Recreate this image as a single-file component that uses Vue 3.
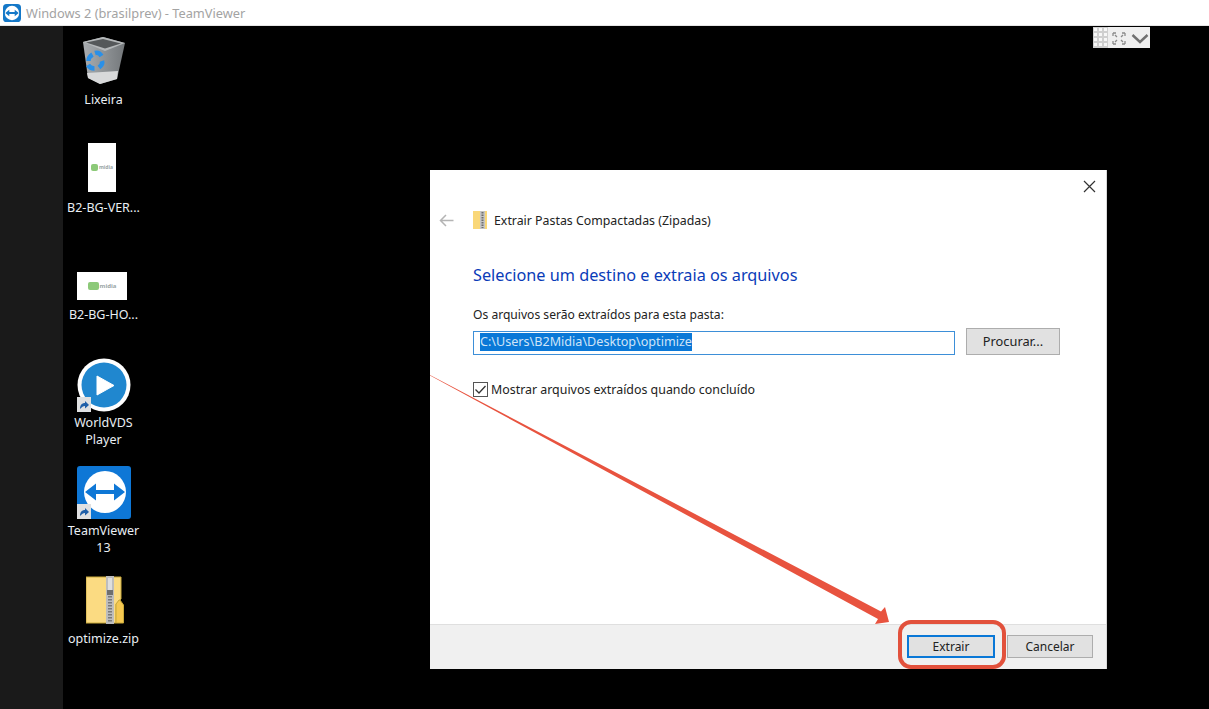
<script setup>
const icons = [
  { id: 'bin', label: ['Lixeira'], top: 91 },
  { id: 'v', label: ['B2-BG-VER...'], top: 199 },
  { id: 'h', label: ['B2-BG-HO...'], top: 306 },
  { id: 'w', label: ['WorldVDS', 'Player'], top: 414 },
  { id: 't', label: ['TeamViewer', '13'], top: 522 },
  { id: 'z', label: ['optimize.zip'], top: 630 }
]
</script>

<template>
  <div class="screen">
    <header class="titlebar">
      <svg class="tv" width="18" height="18" viewBox="0 0 20 20">
        <rect width="20" height="20" rx="4" fill="#1478c8" />
        <circle cx="10" cy="10" r="8" fill="#fff" />
        <path d="M2.500 10l4.500-3.600v2.400h6V6.400l4.500 3.600-4.500 3.600v-2.400H7v2.400z" fill="#1478c8" />
      </svg>
      <span>Windows 2 (brasilprev) - TeamViewer</span>
    </header>

    <main class="desk">
      <aside class="strip"></aside>

      <div class="tool">
        <svg width="57" height="21" viewBox="0 0 57 21">
          <rect width="57" height="21" fill="#efefef" />
          <rect width="15" height="21" fill="#cfcfcf" />
          <g fill="#f7f7f7">
            <rect x="1" y="1" width="3" height="3" /><rect x="6" y="1" width="3" height="3" /><rect x="11" y="1" width="3" height="3" />
            <rect x="1" y="6" width="3" height="3" /><rect x="6" y="6" width="3" height="3" /><rect x="11" y="6" width="3" height="3" />
            <rect x="1" y="11" width="3" height="3" /><rect x="6" y="11" width="3" height="3" /><rect x="11" y="11" width="3" height="3" />
            <rect x="1" y="16" width="3" height="3" /><rect x="6" y="16" width="3" height="3" /><rect x="11" y="16" width="3" height="3" />
          </g>
          <path d="M20 6h3M20 6v3M32 6h-3M32 6v3M20 17h3M20 17v-3M32 17h-3M32 17v-3M22 8l2 2M30 8l-2 2M22 15l2-2M30 15l-2-2" stroke="#8a8a8a" stroke-width="1.300" fill="none" />
          <path d="M39.500 8l7.500 7 7.500-7" stroke="#707070" stroke-width="2.400" fill="none" />
        </svg>
      </div>

      <div v-for="i in icons" :key="i.id" class="label" :style="{ top: i.top + 'px' }">
        <div v-for="l in i.label" :key="l">{{ l }}</div>
      </div>

      <svg class="bin" width="42" height="47" viewBox="0 0 42 47">
        <defs>
          <linearGradient id="binBody" x1="0" y1="0" x2="1" y2="0">
            <stop offset="0" stop-color="#a9adb0" />
            <stop offset="1" stop-color="#74787b" />
          </linearGradient>
        </defs>
        <path d="M0 5L20 0l22 6-8 36-17 5-12-6z" fill="url(#binBody)" />
        <path d="M0 5L20 0l22 6-20 8z" fill="#b5b8ba" />
        <path d="M3 5.500L20 2l18 4.500-16 5z" fill="#55585a" />
        <path d="M4 36l31-2-1 8-17 5-12-6z" fill="#d8d9da" />
        <g fill="none" stroke="#2a90e8" stroke-width="4.500">
          <path d="M5.500 24c0-3 1.500-5 4-6.500" />
          <path d="M12 16c3-1 5 .5 6.500 3" />
          <path d="M19 24c1 3-1 5-3 6.500" />
          <path d="M11.500 31.500c-3 0-5-1-6.500-3.500" />
        </g>
      </svg>

      <div class="doc v"><i></i><b>midia</b></div>
      <div class="doc h"><i></i><b>midia</b></div>

      <svg class="player" width="54" height="54" viewBox="0 0 54 54">
        <circle cx="27" cy="27" r="26.500" fill="#fff" />
        <circle cx="27" cy="27" r="22.500" fill="#2087cf" />
        <path d="M20 18l17 9.500L20 37z" fill="#fff" stroke="#fff" stroke-width="1" stroke-linejoin="round" />
        <rect x="0" y="39" width="14" height="15" fill="#dfe0e1" />
        <path d="M3 51c0-4 2-6 5-6v-2l4 4-4 3.500V48c-2 0-3 1-5 3z" fill="#1f5fa8" />
      </svg>

      <svg class="tvbig" width="54" height="53" viewBox="0 0 54 53">
        <rect width="54" height="53" rx="3" fill="#0e77d6" />
        <circle cx="28" cy="26" r="21" fill="#fff" />
        <path d="M8 26l11-8.500V24h18v-6.500L48 26l-11 8.500V28H19v6.500z" fill="#0e77d6" />
        <rect x="0" y="38" width="14" height="15" fill="#dfe0e1" />
        <path d="M3 50c0-4 2-6 5-6v-2l4 4-4 3.500V47c-2 0-3 1-5 3z" fill="#1f5fa8" />
      </svg>

      <svg class="zip" width="38" height="48" viewBox="0 0 38 48">
        <path d="M0 1h35v22l-5 5v19H0z" fill="#fbdb82" stroke="#c9a93a" stroke-width="1" />
        <path d="M30 47V28l3-4h1l3.500 5v18z" fill="#f5c851" stroke="#c9a93a" stroke-width="1" />
        <rect x="20" y="0" width="8" height="48" fill="#bdbdbd" />
        <path d="M24 2v15" stroke="#dedede" stroke-width="4" />
        <rect x="21" y="14" width="6" height="5" fill="#6f6f6f" />
        <path d="M24 20v27" stroke="#7a7a7a" stroke-width="4" stroke-dasharray="1.500 1.500" />
      </svg>

      <section class="dialog">
        <button class="close" aria-label="Fechar">
          <svg width="13" height="13" viewBox="0 0 13 13">
            <path d="M1 1l11 11M12 1L1 12" stroke="#333" stroke-width="1.200" fill="none" />
          </svg>
        </button>

        <div class="body">
          <div class="nav">
            <svg class="back" width="15" height="13" viewBox="0 0 15 13">
              <path d="M14.500 6.500H1.500M7 1L1.500 6.500 7 12" stroke="#b4b4b4" stroke-width="1.500" fill="none" />
            </svg>
            <svg class="mini" width="14" height="18" viewBox="0 0 14 18">
              <path d="M0 0h14v18H0z" fill="#f9d778" />
              <rect x="7" y="0" width="5" height="18" fill="#c4c4c4" />
              <path d="M9.500 1v16" stroke="#6e6e6e" stroke-width="2" stroke-dasharray="1.500 1" />
            </svg>
            <span class="navtitle">Extrair Pastas Compactadas (Zipadas)</span>
          </div>

          <h1>Selecione um destino e extraia os arquivos</h1>
          <label class="fieldlabel">Os arquivos serão extraídos para esta pasta:</label>
          <div class="row">
            <div class="input"><span class="sel">C:\Users\B2Midia\Desktop\optimize</span></div>
            <button class="btn browse">Procurar...</button>
          </div>
          <div class="check">
            <svg width="15" height="15" viewBox="0 0 15 15">
              <rect x="0.500" y="0.500" width="14" height="14" fill="#fff" stroke="#555" />
              <path d="M2.500 7.500l3.500 3.500 6.500-7" stroke="#333" stroke-width="1.300" fill="none" />
            </svg>
            <span>Mostrar arquivos extraídos quando concluído</span>
          </div>
        </div>

        <footer class="foot">
          <div class="ring"><button class="btn primary">Extrair</button></div>
          <button class="btn cancel">Cancelar</button>
        </footer>
      </section>

      <svg class="arrow" width="1209" height="683" viewBox="0 26 1209 683">
        <path d="M430 375L881 611.500 885 607 889 622 875 624 878 619 430 375.600z" fill="#e8533f" />
      </svg>
    </main>
  </div>
</template>

<style>
html, body { margin: 0; background: #000; }
</style>

<style scoped>
.screen { width: 1209px; height: 709px; display: flex; flex-direction: column; overflow: hidden; font-family: "Noto Sans", "Open Sans", sans-serif; background: #000; }
.titlebar { height: 26px; flex: none; display: flex; align-items: center; gap: 5px; background: #fff; box-sizing: border-box; padding: 0 0 0 3px; border-bottom: 1px solid #e6e6e6; color: #a3a3a3; font-size: 12.800px; }
.tv { flex: none; }
.desk { position: relative; flex: 1; background: #000; }
.strip { position: absolute; left: 0; top: 0; bottom: 0; width: 63px; background: #1a1a1a; }
.tool { position: absolute; left: 1093px; top: 1px; height: 21px; line-height: 0; }
.label { position: absolute; left: 63px; width: 81px; text-align: center; color: #e9eef3; font-size: 12.500px; line-height: 17px; margin-top: -26px; }
.bin { position: absolute; left: 83px; top: 11px; }
.doc { position: absolute; background: #fff; display: flex; align-items: center; justify-content: center; }
.doc i { display: block; background: #8cc978; border-radius: 2px; flex: none; }
.doc b { color: #9aa5a6; line-height: 1; }
.doc.v { left: 88px; top: 117px; width: 28px; height: 49px; }
.doc.v i { width: 7px; height: 7px; }
.doc.v b { font-size: 5px; margin-left: 1px; }
.doc.h { left: 77px; top: 246px; width: 50px; height: 28px; }
.doc.h i { width: 11px; height: 8px; }
.doc.h b { font-size: 6px; margin-left: 1px; }
.player { position: absolute; left: 77px; top: 332px; }
.tvbig { position: absolute; left: 77px; top: 440px; }
.zip { position: absolute; left: 86px; top: 550px; }
.dialog { position: absolute; left: 430px; top: 144px; width: 677px; height: 499px; box-sizing: border-box; background: #fff; border-right: 1px solid #d8d8d8; display: flex; flex-direction: column; }
.close { position: absolute; right: 10px; top: 10px; padding: 0; border: 0; background: none; line-height: 0; }
.body { flex: 1; padding: 40px 46px 0 43px; display: flex; flex-direction: column; align-items: flex-start; color: #222; }
.nav { display: flex; align-items: center; height: 20px; margin-left: -34px; }
.back { margin-right: 19px; }
.mini { margin-right: 7px; }
.navtitle { font-size: 12.350px; }
h1 { margin: 34px 0 0; font-weight: 400; font-size: 16.250px; line-height: 22px; color: #0a3bb8; }
.fieldlabel { margin-top: 20px; font-size: 12.100px; line-height: 17px; }
.row { display: flex; align-items: flex-start; align-self: stretch; gap: 11px; margin-top: 8px; }
.input { flex: 1; height: 24px; box-sizing: border-box; border: 1px solid #3d8fd8; padding: 1px 0 0 6px; font-size: 12.600px; line-height: 18px; }
.sel { background: #0a78d7; color: #cfe4f7; display: inline-block; height: 18px; }
.btn { box-sizing: border-box; font-family: inherit; font-size: 12px; line-height: 17px; color: #222; background: #e1e1e1; border: 1px solid #adadad; padding: 0 0 1px; }
.browse { width: 94px; height: 27px; margin-top: -3px; font-size: 12.800px; }
.check { display: flex; align-items: center; gap: 3px; margin-top: 26px; font-size: 12.400px; line-height: 17px; }
.foot { height: 45px; box-sizing: border-box; background: #f0f0f0; border-top: 1px solid #dfdfdf; display: flex; align-items: center; justify-content: flex-end; gap: 12px; padding: 0 13px 1px 0; position: relative; }
.ring { position: relative; }
.ring::after { content: ""; position: absolute; left: -9px; right: -11px; top: -15px; bottom: -11px; border: 4px solid #e2513c; border-radius: 13px; }
.primary { display: block; width: 88px; height: 23px; border: 2px solid #0a78d7; }
.cancel { width: 86px; height: 23px; }
.arrow { position: absolute; left: 0; top: 0; pointer-events: none; }
</style>
